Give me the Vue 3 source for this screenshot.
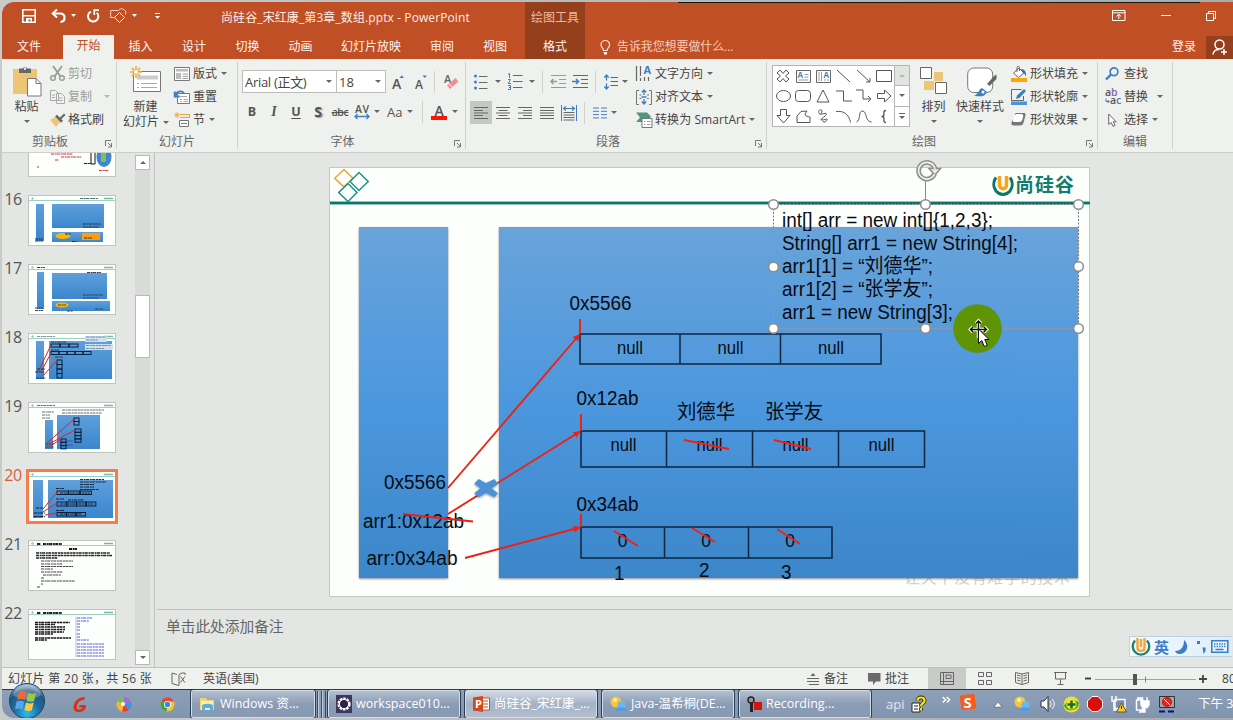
<script setup>
import { h } from 'vue'

const G = '#666'
const B = '#3f7fbf'
const lines = (x, w, ys, c = G) => ys.map((y, i) => `<path d="M${x} ${y}h${Array.isArray(w) ? w[i] : w}" stroke="${c}"/>`).join('')

// [width, height, markup]
const icons = {
  car: [6, 3, `<path d="M0 0h6L3 3z" fill="${G}"/>`],
  carw: [5, 3, '<path d="M0 0h5L2.5 3z" fill="#fff"/>'],
  sep: [1, 22, '<path d="M.5 0v22" stroke="#cfd1ce"/>'],
  save: [14, 14, '<path d="M.8.8h12.4v12.4H.8z" fill="none" stroke="#fff" stroke-width="1.6"/><path d="M1 6.8h12" stroke="#fff" stroke-width="1.5"/><path d="M4 9h6v4H8.500v-2.500H6.500V13H4z" fill="#fff"/>'],
  undo: [15, 14, '<path d="M2 4.500h7c6 0 6 8 .5 8.500" fill="none" stroke="#fff" stroke-width="2.100"/><path d="M6 .5L1.700 4.500 6 8.500" fill="none" stroke="#fff" stroke-width="2"/>'],
  redo: [14, 14, '<path d="M5 2.600A5.200 5.200 0 1 0 10.800 3.600" fill="none" stroke="#fff" stroke-width="2"/><path d="M8.300 6V1.200H13" fill="none" stroke="#fff" stroke-width="1.700"/>'],
  shapes: [17, 15, '<path d="M5 9.500H.7V2.500h8" fill="none" stroke="#f3cfc0"/><path d="M9.500 4.500l5 5-5 5-5-5z" fill="none" stroke="#fff"/><path d="M9 1.500c4-2 8 1 6.500 5" fill="none" stroke="#f3cfc0"/>'],
  custom: [5, 6, '<path d="M0 .5h5" stroke="#fff"/><path d="M0 3h5L2.500 5.700z" fill="#fff"/>'],
  ribopt: [14, 11, '<path d="M.5.5h12.500v10H.5zM.5 2.800h12.500M6.800 9V4.500M4.500 6.500l2.300-2.200 2.300 2.200" fill="none" stroke="#fff"/>'],
  min: [10, 2, '<path d="M0 .5h10" stroke="#fff"/>'],
  restore: [10, 10, '<path d="M.5 2.500h7v7h-7zM2.500 2.500V.5h7v7h-2" fill="none" stroke="#fff"/>'],
  bulb: [11, 15, '<path d="M3.500 10.500C3.500 8 1 7.500 1 4.800a4.300 4.300 0 0 1 8.600 0C9.600 7.500 7 8 7 10.500zM3.500 12.500H7.200" fill="none" stroke="#fbe3da" stroke-width="1.200"/><path d="M4 13h3v1.500H4z" fill="#fff"/>'],
  person: [17, 17, '<circle cx="7.500" cy="5.500" r="4.500" fill="none" stroke="#fff" stroke-width="1.500"/><path d="M1 15.500c.5-3.500 3-5 6-5M9 13h6M12 10v6" fill="none" stroke="#fff" stroke-width="1.500"/>'],
  paste: [29, 31, '<path d="M0 3h24v25H0z" fill="#edc576"/><path d="M6 7V2.500h3.500a3 3 0 0 1 5 0H18V7z" fill="#666"/><circle cx="12" cy="2.800" r="1.200" fill="#eee"/><path d="M14.500 12.500h8.500l5 5v12.500H14.500z" fill="#fff" stroke="#777"/><path d="M23 12.500v5h5" fill="none" stroke="#777"/>'],
  cut: [15, 15, '<path d="M3 0l7.500 10.500M12 0L4.500 10.500" stroke="#9b9d9b" stroke-width="1.900"/><circle cx="3" cy="12" r="2.300" fill="none" stroke="#9b9d9b" stroke-width="1.500"/><circle cx="12" cy="12" r="2.300" fill="none" stroke="#9b9d9b" stroke-width="1.500"/>'],
  copy: [15, 14, '<path d="M.5.5h5l3 3v7h-8zM6.500 3.500h5l3 3v7h-8z" fill="#f1f1f1" stroke="#a9aba9"/><path d="M2 5h3M2 7.500h3M8.500 8h4M8.500 10.500h4" stroke="#a9aba9"/>'],
  carg: [6, 3, '<path d="M0 0h6L3 3z" fill="#b5b7b5"/>'],
  brush: [16, 14, '<path d="M0 7l5-3 5 5-4 5z" fill="#edc576"/><path d="M5 3.500l2-1.800 6 6-2 2z" fill="#666"/><path d="M9.500 5L14 .5l1.500 1.500L11 6.500z" fill="#666"/>'],
  newslide: [32, 27, '<path d="M3.500 5.500h27v20h-27z" fill="#fff" stroke="#777"/><path d="M7 9.500h21v4H7z" fill="#ccc"/><path d="M7 17.500h2M11 17.500h16M7 21.500h2M11 21.500h16" stroke="#aaa"/><path d="M6 0v12M0 6h12M1.800 1.800l8.400 8.400M10.200 1.800l-8.400 8.400" stroke="#eab24f" stroke-width="1.700"/><circle cx="6" cy="6" r="2" fill="#fff"/>'],
  layout: [16, 14, '<path d="M.5.5h15v13H.5z" fill="#fff" stroke="#777"/><path d="M2 2h12v2.500H2zM2 6h5v6H2z" fill="#bbb"/><path d="M8.500 7h5.500M8.500 9.300h5.500M8.500 11.500h5.500" stroke="#999"/>'],
  reset: [16, 14, '<path d="M3.500 3.500h12v10h-12z" fill="#fff" stroke="#777"/><path d="M6 6.500h7M6 9.500h2M9.500 9.500H14M6 11.500h2M9.500 11.500H14" stroke="#aaa"/><path d="M1.500 6C2 1.500 7 0 10 3M.7 1.500v5h5" fill="none" stroke="#3f7fbf" stroke-width="1.900"/>'],
  section: [16, 15, '<path d="M6 2.500h9.500v3H6" fill="none" stroke="#e8a23a"/><path d="M5.500 8.500h9v6h-9zM7 11.500h6" fill="#fff" stroke="#777"/><path d="M3 0v6M0 3h6M1 1l4 4M5 1L1 5" stroke="#eab24f"/>'],
  launch: [7, 8, '<path d="M.5 6V.5H6M3 3l3.500 3.500M6.500 3v4H3" fill="none" stroke="#777"/>'],
  grow: [12, 14, '<text x="0" y="13.500" font-size="14" font-weight="600" fill="#555">A</text><path d="M7.500 3h4.500L9.800.3z" fill="#3f7fbf"/>'],
  shrink: [12, 14, '<text x="0" y="13.500" font-size="12" font-weight="600" fill="#555">A</text><path d="M7.500 .5h4.500L9.800 3z" fill="#3f7fbf"/>'],
  eraser: [15, 15, '<text x="0" y="9" font-size="11" font-weight="600" fill="#666">A</text><path d="M3 11.500L11.500 4l3 3.500L6 15z" fill="#ee8f97"/><path d="M5 9.800l3.500 3.500" stroke="#fff"/>'],
  spacing: [17, 16, '<text x="1" y="8.500" font-size="10.500" font-weight="600" fill="#555" textLength="14">AV</text><path d="M1 12.500h14M3.500 10L1 12.500l2.500 2.500M12.500 10l2.500 2.500-2.500 2.500" fill="none" stroke="#3f7fbf" stroke-width="1.300"/>'],
  color: [16, 16, '<text x="3.500" y="11.500" font-size="14" font-weight="600" fill="#555">A</text><path d="M0 12h16v4H0z" fill="#fd1205"/>'],
  bullets: [14, 16, '<circle cx="1.500" cy="2" r="1.500" fill="#3f7fbf"/><circle cx="1.500" cy="8" r="1.500" fill="#3f7fbf"/><circle cx="1.500" cy="14" r="1.500" fill="#3f7fbf"/>' + lines(5, 8.5, [2.5, 8.5, 14.5])],
  numbers: [15, 17, '<path d="M0 1.500L1.500.500V5M0 6.500h2.500L.3 10.500H3M0 12.500h2.500v4H0M1 14.500h1.500" fill="none" stroke="#3f7fbf"/>' + lines(5, 9.5, [2.5, 8.5, 14.5])],
  outdent: [17, 14, lines(9, 7, [4.5, 8.5], '#999') + lines(1, 15, [.5, 12.5], '#999') + '<path d="M1 6.500h6M3.500 4L1 6.500 3.500 9" fill="none" stroke="#999" stroke-width="1.500"/>'],
  indent: [17, 14, lines(9, 7, [4.5, 8.5]) + lines(1, 15, [.5, 12.5]) + '<path d="M0 6.500h6.500M4 4l2.500 2.500L4 9" fill="none" stroke="#3f7fbf" stroke-width="1.600"/>'],
  spaceln: [15, 16, lines(6.5, 7.5, [3.5, 7.5, 11.5]) + '<path d="M2.500 1v5.500M.3 3.500L2.500 1l2.200 2.500M2.500 9.500V15M.3 12.500L2.500 15l2.200-2.500" fill="none" stroke="#3f7fbf" stroke-width="1.300"/>'],
  left: [14, 12, '<path d="M0 .5h14M0 3.500h9M0 6h14M0 8.500h9M0 11.500h14" stroke="#666"/>'],
  center: [14, 12, '<path d="M0 .5h14M2.500 3.500h9M0 6h14M2.500 8.500h9M0 11.500h14" stroke="#666"/>'],
  right: [14, 12, '<path d="M0 .5h14M5 3.500h9M0 6h14M5 8.500h9M0 11.500h14" stroke="#666"/>'],
  justify: [14, 12, lines(0, 14, [.5, 3.5, 6, 8.5, 11.5])],
  dist: [17, 16, '<path d="M.5 0v16M15.500 0v16" stroke="#3f7fbf"/><path d="M2.500 3.500h11M5 1.500l-2.500 2L5 5.500M11 1.500l2.500 2-2.500 2" fill="none" stroke="#3f7fbf" stroke-width="1.200"/>' + lines(2.5, 11, [7.5, 10, 12.5, 15])],
  cols: [14, 12, lines(0, 6, [1, 4.3, 7.6, 10.9], B) + lines(8, 6, [1, 4.3, 7.6, 10.9], B)],
  tdir: [17, 17, '<path d="M.5 1v15M4.500 1v10M4.500 13v3M8.500 12v4M12.500 12v4" stroke="#666" stroke-width="1.200"/><text x="7.500" y="9" font-size="11" font-weight="700" fill="#3f7fbf">A</text>'],
  talign: [16, 16, '<path d="M3 1.500H.5v14H3M13 1.500h2.500v14H13M3.500 6h2M3.500 9.500h2M11 6h2M11 9.500h2" fill="none" stroke="#777"/><path d="M8 1v5M5.800 3.300L8 1l2.200 2.300M8 10v5M5.800 12.500L8 15l2.200-2.500M5.500 8h5" fill="none" stroke="#3f7fbf" stroke-width="1.300"/>'],
  smart: [17, 16, '<path d="M0 .5h11l4 4-2 2.500H6V10H0l4-4.500z" fill="#559484"/><path d="M6 6.500h10v9H6z" fill="#fff" stroke="#777"/><path d="M8 9.500h1.500M11 9.500h3.500M8 12.500h1.500M11 12.500h3.500" stroke="#999"/>'],
  g0: [14, 14, '<path d="M4 1L7 4.500 10 1l3 3-3.500 3L13 10l-3 3-3-3.500L4 13l-3-3 3.500-3L1 4z" fill="none" stroke="#555"/>'],
  g1: [15, 13, '<path d="M.5.5h14v12H.5z" fill="none" stroke="#666"/><text x="1.500" y="8" font-size="8" font-weight="700" fill="#3f7fbf">A</text><path d="M8.500 4.500h4M8.500 7h4M2.500 10h10" stroke="#999"/>'],
  g2: [15, 13, '<path d="M.5.5h14v12H.5z" fill="none" stroke="#666"/><text x="7.500" y="8" font-size="8" font-weight="700" fill="#3f7fbf">A</text><path d="M3 2v9M5.500 2v9M9 9v2M12 9v2" stroke="#999"/>'],
  g3: [15, 14, '<path d="M1 1l13 12" stroke="#555"/>'],
  g4: [15, 14, '<path d="M1 1l13 12M14 9v4h-4" fill="none" stroke="#555"/>'],
  g5: [16, 12, '<path d="M.5.5h15v11H.5z" fill="none" stroke="#555"/>'],
  g6: [15, 12, '<ellipse cx="7.500" cy="6" rx="7" ry="5.500" fill="none" stroke="#555"/>'],
  g7: [16, 12, '<rect x=".5" y=".5" width="15" height="11" rx="3" fill="none" stroke="#555"/>'],
  g8: [14, 14, '<path d="M7 1l6 12H1z" fill="none" stroke="#555"/>'],
  g9: [16, 12, '<path d="M0 1h7.500v10H16" fill="none" stroke="#555"/>'],
  g10: [16, 14, '<path d="M0 1h7v9h8M12 7l3 3-3 3" fill="none" stroke="#555"/>'],
  g11: [15, 14, '<path d="M.5 4.500h7V1l6.500 6-6.500 6V9.500h-7z" fill="none" stroke="#555"/>'],
  g12: [15, 15, '<path d="M4.500.5h6v6H14l-6.500 7.500L1 6.500h3.500z" fill="none" stroke="#555"/>'],
  g13: [15, 13, '<path d="M1 12.500V6l4-4.500 6-.5-2 3c0 2.500 3.500 2.500 5 3v5.500z" fill="none" stroke="#555"/>'],
  g14: [12, 15, '<path d="M3 5C-1 2 5-1 5 2S1 6 5 5s6-1 3 2-6 4-3 4 6-2 5 0-4 3-4 1" fill="none" stroke="#555"/>'],
  g15: [15, 13, '<path d="M0 1.500c8-1 13 3 14.500 11" fill="none" stroke="#555"/>'],
  g16: [16, 13, '<path d="M.5 12C5 10 2 1 6.500 1S9 12 15.500 12" fill="none" stroke="#555"/>'],
  g17: [6, 13, '<path d="M5 .5C2 .5 3 3 3 4.500S2 6.500.5 6.500C2 6.500 3 7 3 8.500s-1 4 2 4" fill="none" stroke="#555" stroke-width="1.300"/>'],
  arrange: [28, 28, '<path d="M14 5h9v9h-9zM4 14h10v9H4z" fill="#edc576"/><path d="M.5.5h11v11H.5zM15.500 15.500h11v11h-11z" fill="#fff" stroke="#666"/>'],
  qstyle: [30, 30, '<rect x=".7" y="1" width="25" height="24.500" rx="6" fill="#fff" stroke="#777"/><path d="M20 17l7-8 2.500-1.500V12l-7 7z" fill="#666"/><path d="M7 28.500c5-1 4-6 8-7.500l5 4c-2 5-8 5-13 3.500z" fill="#3f7fbf"/><circle cx="16" cy="25" r="1.500" fill="#fff"/>'],
  fill: [16, 16, '<path d="M2.500 7L8 2l5 5-5.500 4.500z" fill="#fff" stroke="#666"/><path d="M6 6V1.500C6 0 8.500 0 8.500 1.500V5" fill="none" stroke="#666"/><path d="M10 3c4 0 5.500 3 5 8-1-3-2-4-3-4z" fill="#3c6ea4"/><path d="M0 12h16v4H0z" fill="#ffa40d"/>'],
  outline: [16, 16, '<path d="M12.500 7v4.500H.5V.5h10" fill="none" stroke="#666"/><path d="M5 10l1-3.500L13 0l2 2-6.500 7z" fill="#3f7fbf"/><path d="M0 12.500h16V16H0z" fill="#4c94d8"/>'],
  effect: [15, 13, '<path d="M4.500 0H13c1 0 2 1 1.500 2L13 8c-.5 3-2 4.500-4 4.500H3C0 12.500 0 11 .8 9z" fill="#777"/><rect x="2" y="1" width="9.500" height="8" rx="2.500" transform="skewX(-14) translate(1.500)" fill="#fff"/>'],
  find: [14, 13, '<circle cx="9" cy="4.800" r="3.900" fill="none" stroke="#3f7fbf" stroke-width="1.700"/><path d="M6 7.500L1 12.500" stroke="#3f7fbf" stroke-width="2.400"/>'],
  replace: [17, 17, '<g font-size="10.500" font-weight="600"><text x="0" y="8" fill="#555">a</text><text x="6" y="8" fill="#8d5fa8">b</text><text x="5" y="16" fill="#555">a</text><text x="11" y="16" fill="#3f7fbf">c</text></g><path d="M1 10.500v3h3M2.700 12l1.500 1.500L2.700 15" fill="none" stroke="#3f7fbf"/>'],
  select: [9, 14, '<path d="M.7 1v10.500l2.500-2L5 13.300l2-1-1.800-3.500h3z" fill="#fff" stroke="#666"/>'],
  proof: [15, 14, '<path d="M6 2.500L1 1v10.500l5 1.500M8 2.500L11 1M8 2.500v11M6 13l2 .5" fill="none" stroke="#666"/><path d="M9.500 4.500l4.500 6M14 4.500l-4.500 6M11 1h3v2" fill="none" stroke="#666"/>'],
  note: [12, 12, '<path d="M6 0l2.500 3h-5z" fill="#666"/><path d="M0 5.500h12M0 8.500h12M2 11.500h10" stroke="#666"/>'],
  comment: [13, 12, '<path d="M0 0h12.500v8.500H8L5 12V8.500H0z" fill="#6a6a6a"/>'],
  normal: [14, 13, '<path d="M.5.5h13v12H.5zM3.500.5v12M.5 9.500h3M6 3h5v3.500H6zM3.500 9.500h10" fill="none" stroke="#666"/>'],
  sorter: [14, 13, '<path d="M.5.5h5v4h-5zM8.500.5h5v4h-5zM.5 8.500h5v4h-5zM8.500 8.500h5v4h-5z" fill="none" stroke="#666"/>'],
  reading: [14, 13, '<path d="M7 2L.5.5v10L7 12.500l6.500-2V.5zV12.500M2 3l3.500 1M2 5.500l3.500 1M2 8l3.500 1M12 3L8.500 4M12 5.500l-3.500 1M12 8l-3.500 1" fill="none" stroke="#666"/>'],
  show: [13, 13, '<path d="M0 .5h13M1.500.5v6.500h10V.5M6.500 7v5M3.500 12.500h6" fill="none" stroke="#666"/>'],
  zminus: [6, 3, '<path d="M0 1.500h6" stroke="#444" stroke-width="2"/>'],
  zplus: [8, 8, '<path d="M0 4h8M4 0v8" stroke="#444" stroke-width="1.800"/>'],
  slider: [101, 12, '<path d="M0 6.500h101" stroke="#a0a2a0"/><path d="M50.500 3.500v6" stroke="#888"/><path d="M38 1h4v11h-4z" fill="#555"/>'],
  gred: [16, 17, '<path d="M13 1C7 1 2 5 1.500 10.500 1 15 4 16.500 8 16c4-.5 6.500-3 6-7H7.500l-.5 2.500h3.500c-.5 1.500-2 2-3.500 2-2 0-2.500-1.500-2-4C5.500 6 9 4 12 4z" fill="#d93314"/>'],
  pinwheel: [16, 17, '<circle cx="8" cy="8.500" r="7.500" fill="#f5b52c"/><path d="M8 8.500L1 5a7.500 7.500 0 0 1 7-4z" fill="#6cc24a"/><path d="M8 8.500V1a7.500 7.500 0 0 1 7 4.500z" fill="#a06bd6"/><path d="M8 8.500l7-3a7.500 7.500 0 0 1-2 8.500z" fill="#3f8fe0"/><path d="M8 8.500l5 5.500a7.500 7.500 0 0 1-7 1.500z" fill="#e8412f"/><circle cx="7" cy="8" r="2" fill="#fff"/>'],
  chrome: [15, 15, '<circle cx="7.500" cy="7.500" r="7" fill="#f6c928"/><path d="M7.500 7.500L1.400 4A7 7 0 0 1 14 4.500H7.500z" fill="#df4a36"/><path d="M7.500 7.500L1.400 4A7 7 0 0 0 6.500 14.500z" fill="#3fa24e"/><circle cx="7.500" cy="7.500" r="3.500" fill="#fff"/><circle cx="7.500" cy="7.500" r="2.700" fill="#4285d6"/>'],
  explorer: [17, 15, '<path d="M1 1h6l1 2h7v10H1z" fill="#f3d36b"/><path d="M2 4h12v9H2z" fill="#fbeeb0"/><path d="M3 14V9c0-3 11-3 11 0v5h-3v-3H6v3z" fill="#5aaee0"/>'],
  eclipse: [16, 18, '<path d="M0 0h16v18H0z" fill="#3f3562"/><circle cx="8" cy="9" r="5.500" fill="#2b2444" stroke="#fff" stroke-width="2.200" stroke-dasharray="2.500 1"/><circle cx="8" cy="9" r="4.600" fill="none" stroke="#fff"/>'],
  ppt: [17, 16, '<path d="M8 2h8.500v12H8z" fill="#fff" stroke="#d3481f"/><path d="M10 5h5M10 8h5M10 11h5" stroke="#d3481f"/><path d="M0 1.500L10 0v16L0 14.500z" fill="#d3481f"/><text x="2" y="12" font-size="11" font-weight="700" fill="#fff">P</text>'],
  chat: [17, 16, '<circle cx="6" cy="6" r="5.500" fill="#f8c637"/><circle cx="11.500" cy="9" r="4" fill="#6db7ee"/><path d="M6 15c0-5 10-5 10 0z" fill="#4aa0e6"/><circle cx="5" cy="4" r="2" fill="#fdeaa5"/>'],
  rec: [15, 17, '<path d="M7 6h8v8H7z" fill="#d8120c"/><circle cx="4" cy="4" r="3" fill="#999" stroke="#222" stroke-width="1.400"/><path d="M3 7h3v9H3z" fill="#222"/>'],
  help: [15, 17, '<path d="M1 7h8v9H1z" fill="#fff" stroke="#222"/><path d="M3 10h4M3 13h4" stroke="#222"/><path d="M6.500 4.500c0-4 7-4 7 0 0 3-3.500 2.500-3.500 5.500M10 12v2.500" fill="none" stroke="#222" stroke-width="3.800"/><path d="M6.500 4.500c0-4 7-4 7 0 0 3-3.500 2.500-3.500 5.500M10 12v2.500" fill="none" stroke="#ffe600" stroke-width="2.200"/>'],
  chev: [9, 8, '<path d="M.7 1l3 2.700-3 2.700M4.700 1l3 2.700-3 2.700" fill="none" stroke="#fff" stroke-width="1.400"/>'],
  sogou: [16, 16, '<rect x=".5" y=".5" width="15" height="15" rx="2.500" fill="#fa5a1a" transform="rotate(-8 8 8)"/><text x="3.500" y="13.500" font-size="15" font-weight="700" fill="#fff">S</text>'],
  up: [8, 5, '<path d="M0 5h8L4 0z" fill="#fff" stroke="#445" stroke-width=".5"/>'],
  speaker: [15, 16, '<path d="M1 5h3l4-4.500v15L4 11H1z" fill="#fff" stroke="#333"/><path d="M10 5c1.500 2 1.500 4 0 6M12 3c3 3 3 7 0 10" fill="none" stroke="#fff"/>'],
  guard: [17, 17, '<circle cx="8.500" cy="8.500" r="8" fill="#f6dd24"/><path d="M1 10C3 4 13 2 16 7a8 8 0 0 1-15 3z" fill="#39a635"/><circle cx="8.500" cy="8.500" r="5" fill="#f6e83a"/><path d="M8.500 4.500v8M4.500 8.500h8" stroke="#176c20" stroke-width="2.500"/>'],
  redoct: [16, 16, '<path d="M5 .5h6L15.500 5v6L11 15.500H5L.5 11V5z" fill="#d80f0b" stroke="#fff"/>'],
  net: [16, 17, '<path d="M4 3.500h10v9H4z" fill="#7c8fa6" stroke="#fff" stroke-width="1.400"/><path d="M1 0v5h4V0M3 5v9h3" fill="none" stroke="#fff" stroke-width="1.500"/><path d="M10.500 7l5 9h-10z" fill="#ffce1e" stroke="#553"/><path d="M10.500 10v3" stroke="#222"/>'],
  plug: [15, 17, '<path d="M1.500 4h6v10h-6zM3 2h3v2H3z" fill="none" stroke="#fff" stroke-width="1.500"/><path d="M6 5h8v4l-2 2.500H8L6 9zM7.500 1v4M12 1v4M10 11v5H4" fill="#fff" stroke="#fff" stroke-width="1.400"/>'],
  blocked: [16, 17, '<path d="M.5.5h15v11H.5z" fill="#9aa" stroke="#333"/><circle cx="8" cy="6" r="4.300" fill="#c33" stroke="#e01010" stroke-width="1.500"/><path d="M5 3l6 6" stroke="#fff"/><path d="M0 15.500h6M9 15.500h6" stroke="#10107a" stroke-width="2"/>'],
}
const Ic = (p) => {
  const [w, ht, m] = icons[p.n]
  return h('svg', { width: w, height: ht, viewBox: `0 0 ${w} ${ht}`, innerHTML: m })
}
Ic.props = ['n']

const tabsA = [['插入', 53], ['设计', 54], ['切换', 53], ['动画', 53], ['幻灯片放映', 88], ['审阅', 54], ['视图', 52]]
const px = (w) => ({ width: w + 'px' })

// toolbar cells: icon name, cell width
const fontRow = [['spacing', 20], ['car', 12]]
const paraTop = [['bullets', 21], ['car', 13], ['numbers', 21], ['car', 13], ['sep', 8], ['outdent', 22], ['indent', 23], ['sep', 9], ['spaceln', 18], ['car', 6]]
const paraBot = [['center', 22], ['right', 22], ['justify', 21], ['dist', 23], ['sep', 9], ['cols', 18], ['car', 6]]

const ink = (c, list, w = 1) => list.map(([x, y, l]) => `<path d="M${x} ${y}h${l}" stroke="${c}" stroke-width="${w}" stroke-dasharray="3 .7 2 .4"/>`).join('')
const blue = (x, y, w, hh) => `<rect x="${x}" y="${y}" width="${w}" height="${hh}" fill="url(#thumbBlue)"/>`
const head = '<path d="M0 4.500h86" stroke="#9fd0c6"/><path d="M2 2.500l1.500-1.500L5 2.500 3.500 4z" fill="#8fcabb"/><path d="M75 2.500h9" stroke="#79b9a0" stroke-width="1.500"/>'
const redln = (d) => `<path d="${d}" fill="none" stroke="#e2231a"/>`
const cells = (x, y, w, hh, n) => Array.from({ length: n }, (_, i) => `<rect x="${x + i * w}" y="${y}" width="${w}" height="${hh}" fill="none" stroke="#0b1f3a"/>`).join('')
const vcells = (x, y, w, hh, n) => Array.from({ length: n }, (_, i) => `<rect x="${x}" y="${y + i * hh}" width="${w}" height="${hh}" fill="none" stroke="#0b1f3a"/>`).join('')
const thumbs = [
  { n: '', m: ink('#c33', [[22, 27, 22], [32, 30, 20], [26, 33, 4], [8, 40, 2]]) + '<ellipse cx="75" cy="30" rx="7.500" ry="10" fill="#3f86d0"/><path d="M72 24h5v11h-5z" fill="#7fc05a"/><path d="M62 25v12h4V25" fill="none" stroke="#111"/>' + ink('#111', [[55, 36.5, 7]]) + ink('#e33', [[70, 43.5, 10]]) },
  { n: 16, m: head + blue(7, 8, 8, 37) + blue(23, 8, 52, 24) + blue(23, 36, 51, 10) + '<ellipse cx="34" cy="40" rx="7.500" ry="3" fill="#f8b40c"/><path d="M53 37h18v7H53z" fill="#ff9d0b"/>' + ink('#567', [[51, 2.500, 18]]) + ink('#234', [[54, 28, 18], [54, 31, 16], [6, 43, 8], [6, 45, 8], [55, 42, 8], [36, 38, 6], [43, 45.500, 5]]) },
  { n: 17, m: head + blue(8, 7, 7, 37) + blue(23, 8, 55, 26) + blue(23, 36, 58, 10) + '<ellipse cx="33" cy="40" rx="6.500" ry="2.600" fill="#f8b40c"/>' + ink('#345', [[8, 2.5, 8], [58, 7.5, 14], [54, 30, 20], [54, 33, 16], [6, 43, 8], [6, 45.5, 8], [29, 40, 8], [66, 44, 8], [38, 46, 6]]) },
  { n: 18, m: head + blue(7, 7, 8, 38) + blue(20, 7, 63, 38) + '<path d="M56 2h22v6H56zM56 10h28v6H56z" fill="#cfe0f2"/>' + cells(22, 10, 9, 3, 3) + cells(22, 17.5, 8, 3, 5) + vcells(28, 26, 5, 4.500, 4) + redln('M9 38L22 11M12 38L22 19M14 42L28 26') + ink('#567', [[8, 2.5, 18], [57, 3, 20], [57, 6, 12], [57, 11.500, 25], [57, 14.500, 18]], .7) + ink('#123', [[22, 8, 16], [22, 16, 8], [26, 23, 8], [8, 35, 8], [6, 38, 10], [7, 44, 10]], .8) },
  { n: 19, m: head + blue(16, 17, 8, 29) + blue(28, 12, 43, 34) + vcells(45, 15, 5, 3.500, 2) + vcells(46, 26, 6, 3.300, 4) + vcells(32, 36, 5, 3.300, 3) + redln('M17 41L45 16M18 42L46 27M20 44L32 36') + ink('#445', [[8, 2.500, 18], [33, 7, 42], [33, 10, 40], [13, 9, 12], [13, 12, 8], [13, 15, 8], [16, 41, 9], [16, 44, 9], [38, 38, 6], [38, 42, 6]], .8) },
  { n: 20, sel: true, m: head + blue(4, 8, 10, 38) + blue(19, 8, 65, 38) + cells(28, 19, 11.500, 3.500, 3) + cells(28, 30, 9.700, 4, 4) + cells(28, 40.500, 9.500, 3.500, 3) + redln('M14 37L28 20M14 40L28 31M16 43L28 41') + ink('#0b1a30', [[51, 7.500, 24], [51, 10, 26], [51, 12.500, 14], [51, 15, 14], [51, 17.500, 19], [27, 16.500, 8], [27, 27, 8], [39, 28, 16], [27, 38.500, 8], [7, 36, 7], [5, 41, 11], [5, 44.500, 11], [31, 21, 30], [31, 32, 34], [31, 42, 22]], .9) },
  { n: 21, m: head + ink('#222', [[8, 3, 4], [14, 3, 19]], 2) + ink('#111', [[40, 8, 8]], 2) + ink('#222', [[7, 12, 74], [7, 14.500, 76], [7, 17, 22]], 1.300) + ink('#444', [[12, 20, 32], [12, 23, 22], [12, 25.500, 32], [12, 28, 12], [12, 31, 22], [14, 34, 18], [12, 37, 3], [12, 40, 34], [12, 43, 2], [8, 46, 3]]) },
  { n: 22, m: head + ink('#222', [[8, 3, 4], [14, 3, 19]], 2) + ink('#111', [[6, 12.500, 35], [6, 14.500, 20], [6, 17, 30], [6, 19.500, 30], [6, 22, 29], [6, 24, 18], [6, 28, 36], [6, 30, 12]], 1.300) + ink('#5a5ad8', [[48, 8, 15], [48, 11, 12], [48, 14, 3], [48, 17, 3], [48, 20, 3], [48, 24, 3], [48, 27, 3], [48, 30, 12], [48, 34, 27], [48, 37, 27], [48, 40, 27], [48, 43, 27], [48, 46, 27]]) + '<path d="M47 7v40" stroke="#bbc"/>' },
]

const handles = [[773.5, 204.5], [925.5, 204.5], [1078.5, 204.5], [773.5, 267], [1078.5, 266.5], [773.5, 328.5], [925.5, 328.5], [1078.5, 328.5]]
const code = [['int[] arr = new int[]{1,2,3};', 227, 211], ['String[] arr1 = new String[4];', 250, 236], ['arr1[1] = “刘德华”;', 273, 151], ['arr1[2] = “张学友”;', 296, 151], ['arr1 = new String[3];', 319, 171]]
const labels = [['0x5566', 569.5, 310, 62], ['0x12ab', 576.5, 405, 62], ['0x34ab', 576.5, 511, 62], ['0x5566', 384, 489, 62], ['arr1:0x12ab', 363, 528, 101], ['arr:0x34ab', 366.5, 565, 91], ['刘德华', 677, 419, 58], ['张学友', 765, 419, 58], ['1', 614, 580, 10.5], ['2', 699, 577, 10.5], ['3', 781, 579, 10.5]]
const nulls = [[617, 354], [717.5, 354], [818, 354], [610.5, 451], [696.5, 451], [782.5, 451], [868.5, 451]]
const tray = [['chev', 18], ['sogou', 34], ['up', 20], ['chat', 26], ['speaker', 23], ['guard', 24], ['redoct', 24], ['net', 24], ['plug', 24], ['blocked', 39]]
</script>

<template>
  <div class="desk">
    <div class="win">
      <header class="title">
        <Ic n="save" class="m20" /><Ic n="undo" class="m15" /><Ic n="carw" class="m5" /><Ic n="redo" class="m10" />
        <Ic n="shapes" class="m10" /><Ic n="carw" class="m5" /><Ic n="custom" class="m17" />
        <span class="name">尚硅谷_宋红康_第3章_数组.pptx - PowerPoint</span>
        <span class="ctx">绘图工具</span>
        <div class="wbtns"><Ic n="ribopt" /><Ic n="min" /><Ic n="restore" /></div>
      </header>
      <nav class="tabs">
        <span class="file">文件</span><span class="active">开始</span>
        <span v-for="t in tabsA" :key="t[0]" :style="px(t[1])">{{ t[0] }}</span>
        <span class="fmt">格式</span>
        <Ic n="bulb" class="m15" /><span class="tell">告诉我您想要做什么...</span>
        <span class="login">登录</span>
        <span class="share"><Ic n="person" /></span>
      </nav>

      <section class="ribbon">
        <div class="grp g-clip">
          <div class="gbody">
            <div class="big"><Ic n="paste" class="bi" /><span>粘贴</span><Ic n="car" /></div>
            <div class="col c1">
              <div class="row dim"><i><Ic n="cut" /></i>剪切</div>
              <div class="row dim"><i><Ic n="copy" /></i>复制<Ic n="carg" class="m12" /></div>
              <div class="row"><i><Ic n="brush" /></i>格式刷</div>
            </div>
          </div>
          <div class="glabel"><b>剪贴板</b><Ic n="launch" /></div>
        </div>

        <div class="grp g-slide">
          <div class="gbody">
            <div class="big"><Ic n="newslide" class="bi" /><span>新建</span><span class="two">幻灯片<Ic n="car" /></span></div>
            <div class="col c2">
              <div class="row"><i><Ic n="layout" /></i>版式<Ic n="car" class="m4" /></div>
              <div class="row"><i><Ic n="reset" /></i>重置</div>
              <div class="row"><i><Ic n="section" /></i>节<Ic n="car" class="m4" /></div>
            </div>
          </div>
          <div class="glabel"><b>幻灯片</b></div>
        </div>

        <div class="grp g-font">
          <div class="gbody rows">
            <div class="tr">
              <div class="combo fam"><span>Arial (正文)</span><Ic n="car" /></div>
              <div class="combo size"><span>18</span><Ic n="car" /></div>
              <Ic n="grow" class="m6" /><Ic n="shrink" class="m11" /><Ic n="sep" class="m7" /><Ic n="eraser" class="m9" />
            </div>
            <div class="tr t2">
              <span class="f bold">B</span><span class="f ital">I</span><span class="f und">U</span><span class="f shad">S</span><span class="f abc">abc</span>
              <div v-for="(c, i) in fontRow" :key="i" :style="px(c[1])"><Ic :n="c[0]" /></div>
              <span class="aa">Aa</span><Ic n="car" class="m4" /><Ic n="sep" class="m9" /><Ic n="color" class="m8" /><Ic n="car" class="m5" />
            </div>
          </div>
          <div class="glabel"><b>字体</b><Ic n="launch" /></div>
        </div>

        <div class="grp g-para">
          <div class="gbody">
            <div class="rows pr">
              <div class="tr pt"><div v-for="(c, i) in paraTop" :key="i" :style="px(c[1])"><Ic :n="c[0]" /></div></div>
              <div class="tr pb"><div class="on"><Ic n="left" /></div><div v-for="(c, i) in paraBot" :key="i" :style="px(c[1])"><Ic :n="c[0]" /></div></div>
            </div>
            <div class="col">
              <div class="row"><i><Ic n="tdir" /></i>文字方向<Ic n="car" class="m4" /></div>
              <div class="row"><i><Ic n="talign" /></i>对齐文本<Ic n="car" class="m4" /></div>
              <div class="row smart"><i><Ic n="smart" /></i>转换为 SmartArt<Ic n="car" class="m4" /></div>
            </div>
          </div>
          <div class="glabel"><b>段落</b><Ic n="launch" /></div>
        </div>

        <div class="grp g-draw">
          <div class="gbody">
            <div class="gallery">
              <div class="shapes"><div v-for="k in 18" :key="k"><Ic :n="'g' + (k - 1)" /></div></div>
              <div class="gs"><div class="off"><Ic n="carg" class="flip" /></div><div><Ic n="car" /></div><div class="more"><Ic n="car" /></div></div>
            </div>
            <div class="big arr"><Ic n="arrange" class="bi" /><span>排列</span><Ic n="car" /></div>
            <div class="big qs"><Ic n="qstyle" class="bi" /><span>快速样式</span><Ic n="car" /></div>
            <div class="col">
              <div class="row"><i><Ic n="fill" /></i>形状填充<Ic n="car" class="m4" /></div>
              <div class="row"><i><Ic n="outline" /></i>形状轮廓<Ic n="car" class="m4" /></div>
              <div class="row"><i><Ic n="effect" /></i>形状效果<Ic n="car" class="m4" /></div>
            </div>
          </div>
          <div class="glabel"><b>绘图</b><Ic n="launch" /></div>
        </div>

        <div class="grp g-edit">
          <div class="gbody">
            <div class="col">
              <div class="row"><i><Ic n="find" /></i>查找</div>
              <div class="row"><i><Ic n="replace" /></i>替换<Ic n="car" class="m9" /></div>
              <div class="row"><i class="sel"><Ic n="select" /></i>选择<Ic n="car" class="m4" /></div>
            </div>
          </div>
          <div class="glabel"><b>编辑</b></div>
        </div>
      </section>

      <main class="work">
        <svg class="defs" width="0" height="0"><defs><linearGradient id="thumbBlue" x1="0" y1="0" x2="0" y2="1"><stop offset="0" stop-color="#5f9fdb" /><stop offset="1" stop-color="#3b86cd" /></linearGradient></defs></svg>
        <aside class="list">
          <div v-for="t in thumbs" :key="t.n" class="item" :class="{ sel: t.sel }">
            <span>{{ t.n }}</span>
            <svg class="th" width="86" height="49" viewBox="0 0 86 49" v-html="t.m"></svg>
          </div>
        </aside>
        <div class="scroll"><div class="sb"><Ic n="car" class="flip" /></div><div class="knob"></div><div class="sb"><Ic n="car" /></div></div>
        <div class="editor">
          <svg class="canvas" width="1076" height="456" viewBox="157 153 1076 456">
            <defs>
              <linearGradient id="panel" x1="0" y1="0" x2="0" y2="1"><stop offset="0" stop-color="#69a3da" /><stop offset=".5" stop-color="#4c97de" /><stop offset="1" stop-color="#3c86ca" /></linearGradient>
              <filter id="sh" x="-10%" y="-10%" width="120%" height="120%"><feDropShadow dx="0" dy="1" stdDeviation="1.3" flood-color="#000" flood-opacity=".45" /></filter>
              <marker id="ah" viewBox="0 0 6 6" refX="5.5" refY="3" markerWidth="7" markerHeight="7" markerUnits="userSpaceOnUse" orient="auto"><path d="M0 0l6 3-6 3z" fill="#f02010" /></marker>
            </defs>
            <rect x="329.5" y="167.5" width="760" height="429" fill="#fdfffd" stroke="#c6c8c5" />
            <rect x="330" y="201.3" width="760" height="3.4" fill="#62b0a2" /><rect x="330" y="202" width="760" height="2" fill="#0a766a" />
            <g fill="none" stroke-width="1.5">
              <path d="M344 169.500l9 8.700-9 8.700-9.300-8.700z" stroke="#f0a232" />
              <path d="M359 172.500l9.200 9-9.200 9-9-9z" stroke="#189488" /><path d="M348 183.500l9 9-9 9-9.300-9z" stroke="#189488" />
            </g>
            <text x="904" y="583" class="wm" textLength="166">让天下没有难学的技术</text>
            <rect x="359" y="227" width="89" height="351" fill="url(#panel)" filter="url(#sh)" />
            <rect x="499" y="227" width="579" height="351" fill="url(#panel)" filter="url(#sh)" />
            <g fill="none">
              <path d="M996 177.500c-3 4-3 9.500 0 13.500 4 4.500 10 4.500 14 0 3-4 3-9.500 0-13.500" stroke="#0c776b" stroke-width="3" />
              <path d="M999.500 176v9c0 5 7 5 7 0v-9" stroke="#fba21c" stroke-width="3.600" />
            </g>
            <text x="1015" y="191.500" class="brand" textLength="59">尚硅谷</text>
            <g fill="none" stroke="#10253f" stroke-width="1.5">
              <path d="M580 334h301v30H580zM680 334v30M780.500 334v30" />
              <path d="M581 431h343.500v36H581zM666.500 431v36M752.500 431v36M838.500 431v36" />
              <path d="M581 527h251v31H581zM664.500 527v31M748.500 527v31" />
            </g>
            <text v-for="(l, i) in labels" :key="'l' + i" class="lab" :x="l[1]" :y="l[2]" :textLength="l[3]" lengthAdjust="spacingAndGlyphs">{{ l[0] }}</text>
            <text v-for="(l, i) in nulls" :key="'n' + i" class="nul" :x="l[0]" :y="l[1]" textLength="26" lengthAdjust="spacingAndGlyphs">null</text>
            <text v-for="x in [622.5, 706, 790]" :key="x" class="nul" :x="x" y="547" text-anchor="middle">0</text>
            <g fill="none" stroke="#f02010" stroke-width="1.9">
              <path d="M580 319v14.500M581 414v17M581 514v13" />
              <path d="M448 488L579.500 334.500" marker-end="url(#ah)" /><path d="M448 514L580 431.500" marker-end="url(#ah)" /><path d="M465 558L580 527.500" marker-end="url(#ah)" />
              <path d="M403 514l70 7.500M684 440l45 9M774 440l37 9M614 531l24 15M692 528l23 14M777 529l23 15" />
            </g>
            <path d="M478.700 479L486 483l8.300-4 3.700 4.700-6.300 4.600 6.300 5-3.700 4-8.300-4.300-7.300 4.300-4.400-4 6-5-6-4.600z" fill="#4d91d6" filter="url(#sh)" />
            <path d="M773.500 204.500H1078M773.500 205v22M1078.500 205v124" fill="none" stroke="#777" stroke-dasharray="2 1.500" />
            <path d="M773.500 227v101.500H1078" fill="none" stroke="#8298b3" />
            <path d="M925.500 180v24" stroke="#888" />
            <path d="M934.500 174a8.300 8.300 0 1 1 .5-5" fill="none" stroke="#8d8f8d" stroke-width="4.800" /><path d="M929 168.500h11.500l-5.500 6.500z" fill="#eee" stroke="#8d8f8d" stroke-width="1.500" />
            <path d="M934.500 174a8.300 8.300 0 1 1 .5-5" fill="none" stroke="#eee" stroke-width="1.700" />
            <text v-for="c in code" :key="c[0]" class="lab" x="782" :y="c[1]" :textLength="c[2]" lengthAdjust="spacingAndGlyphs">{{ c[0] }}</text>
            <circle v-for="(c, i) in handles" :key="'h' + i" :cx="c[0]" :cy="c[1]" r="4.800" fill="#fff" stroke="#8b8d8e" stroke-width="1.500" />
            <path d="M953.500 303v21" stroke="#b08868" />
            <circle cx="977.5" cy="328.5" r="24.300" fill="#5f9407" />
            <path d="M978.500 321v17M970.500 329.500h16M976 323.500l2.500-2.500 2.500 2.500M973 327l-2.500 2.500 2.500 2.500M984 327l2.500 2.500-2.500 2.500" fill="none" stroke="#fff" stroke-width="3.400" />
            <path d="M978.500 321v17M970.500 329.500h16M976 323.500l2.500-2.500 2.500 2.500M973 327l-2.500 2.500 2.500 2.500M984 327l2.500 2.500-2.500 2.500" fill="none" stroke="#111" stroke-width="1.400" />
            <path d="M978.500 329v14.500l3.300-3 2.500 6 3-1.200-2.600-5.800h4.300z" fill="#fff" stroke="#111" />
          </svg>
          <div class="notes">单击此处添加备注</div>
          <div class="ime">
            <svg width="18" height="19" viewBox="0 0 18 19"><path d="M3 3.500C0 7 0 12 3 15c3.500 3.500 8.500 3.500 12 0 3-3 3-8 0-11.500" fill="none" stroke="#25806f" stroke-width="2.400" /><path d="M5.500 1v9.500c0 4.500 7 4.500 7 0V1M9 2v8" fill="none" stroke="#f2a33a" stroke-width="2.400" /></svg>
            <span>英</span>
            <svg width="13" height="14" viewBox="0 0 13 14"><path d="M9 0c6 5 3 14-4.500 14C2 14 .5 12.500 0 11 7 11 9 6 9 0z" fill="#3a7dc8" /></svg>
            <svg class="pu" width="9" height="14" viewBox="0 0 9 14"><path d="M0 1h3v3H0zM5.500 7.500h3V11l-2 3" fill="#3a7dc8" /></svg>
            <svg width="17" height="13" viewBox="0 0 17 13"><path d="M.8.8h16v11.400H.8z" fill="#e9f3fc" stroke="#3a7dc8" stroke-width="1.600" /><path d="M3 4h12M3 6.500h12" stroke="#3a7dc8" stroke-width="1.500" stroke-dasharray="1.500 1" /><path d="M4.500 9.500h8" stroke="#3a7dc8" stroke-width="1.500" /></svg>
          </div>
        </div>
      </main>

      <footer class="status">
        <span class="pages">幻灯片 第 20 张，共 56 张</span><Ic n="proof" /><span class="lang">英语(美国)</span>
        <div class="sr">
          <Ic n="note" /><span class="s1">备注</span><Ic n="comment" /><span class="s2">批注</span>
          <div class="son"><Ic n="normal" /></div><Ic n="sorter" class="m12" /><Ic n="reading" class="m23" /><Ic n="show" class="m25" />
          <Ic n="zminus" class="m18" /><Ic n="slider" class="m4" /><Ic n="zplus" class="m3" /><span class="pct">80%</span>
        </div>
      </footer>

      <div class="task">
        <svg class="orb" width="38" height="36" viewBox="0 0 38 36">
          <defs><radialGradient id="orbg" cx=".5" cy=".85" r=".8"><stop offset="0" stop-color="#27c0f4" /><stop offset=".45" stop-color="#1f6c9f" /><stop offset=".8" stop-color="#24577f" /><stop offset="1" stop-color="#9bb5c9" /></radialGradient></defs>
          <circle cx="19" cy="18" r="17.500" fill="url(#orbg)" stroke="#1e4565" />
          <path d="M5 12C9-1 29-1 33 12 27 17 11 17 5 12z" fill="#fff" opacity=".25" />
          <path d="M11 9c3-1.500 5-1 7.500.3L17 17c-3-1.200-5-1.300-8 0z" fill="#ee6a35" /><path d="M20 10c3 1.200 5 1.300 8 0l-2 8c-3 1.300-5 1-7.500-.3z" fill="#9bc944" />
          <path d="M8.500 18.500c3-1.300 5-1 7.700.2l-1.700 7.500c-3-1-5-1-7.500.3z" fill="#52a8e8" /><path d="M18 19.500c3 1.200 5 1.300 7.800 0l-2 7.800c-3 1.300-5 1-7.500-.3z" fill="#fcc93c" />
        </svg>
        <Ic n="gred" class="m26" /><Ic n="pinwheel" class="m28" /><Ic n="chrome" class="m28" />
        <div class="tb b1"><Ic n="explorer" /><span>Windows 资...</span></div>
        <div class="stack"></div>
        <div class="tb b2"><Ic n="eclipse" /><span>workspace010...</span></div>
        <div class="tb b3"><Ic n="ppt" /><span>尚硅谷_宋红康_...</span></div>
        <div class="tb b4"><Ic n="chat" /><span>Java-温希桐(DE...</span></div>
        <div class="tb b5"><Ic n="rec" /><span>Recording...</span></div>
        <span class="api">api</span><div class="hp"><Ic n="help" /></div>
        <div v-for="t in tray" :key="t[0]" class="tc" :class="t[0]" :style="px(t[1])"><Ic :n="t[0]" /></div>
        <span class="clock">下午 3:06</span>
      </div>
    </div>
  </div>
</template>

<style>
html, body { margin: 0; overflow: hidden; }
svg { display: block; flex: none; overflow: visible; }
</style>
<style scoped>
.desk { width: 1233px; height: 720px; box-sizing: border-box; padding: 2px 0 2px 2px; background: linear-gradient(90deg, #c9cbca, #a9abaa); overflow: hidden; font: 12px/18px "Open Sans", "Noto Sans CJK SC", sans-serif; color: #444; white-space: nowrap; }
.win { width: 1231px; height: 716px; border-radius: 12px 0 0 12px; overflow: hidden; display: flex; flex-direction: column; background: #e4e6e3; }
.m3 { margin-left: 3px; } .m4 { margin-left: 4px; } .m5 { margin-left: 5px; } .m6 { margin-left: 6px; } .m7 { margin-left: 7px; } .m8 { margin-left: 8px; } .m9 { margin-left: 9px; }
.m10 { margin-left: 10px; } .m11 { margin-left: 11px; } .m12 { margin-left: 12px; } .m15 { margin-left: 15px; } .m17 { margin-left: 18px; } .m18 { margin-left: 18px; } .m20 { margin-left: 20px; }
.m23 { margin-left: 23px; } .m25 { margin-left: 25px; } .m26 { margin-left: 26px; } .m28 { margin-left: 28px; }
.flip { transform: scaleY(-1); }
.title { height: 33px; flex: none; display: flex; align-items: center; background: linear-gradient(#151515, #151515) 676px 0 / 522px 1px no-repeat, #c04f25; color: #fdeee8; box-sizing: border-box; }
.title > svg { margin-bottom: 6px; }
.name { width: 304px; margin-left: 61px; letter-spacing: .1px; padding-bottom: 2px; }
.ctx { width: 60px; line-height: 31px; height: 33px; text-align: center; background: #963f1d; color: #f0b79f; }
.wbtns { flex: 1; display: flex; align-items: center; justify-content: flex-end; gap: 35px; padding: 0 17px 6px 0; }
.tabs { height: 24px; flex: none; display: flex; align-items: center; background: #c04f25; color: #fff4ef; text-align: center; line-height: 22px; }
.tabs > span { flex: none; }
.file { width: 54px; margin-right: 7px; }
.active { width: 51px; height: 24px; background: #eff1ee; color: #c04f25; }
.fmt { width: 60px; height: 24px; line-height: 23px; margin-left: 4px; background: #963f1d; }
.tell { margin-left: 6px; color: #f7cdbc; letter-spacing: -.1px; }
.login { margin-left: auto; margin-right: 10px; }
.share { width: 27px; height: 23px; background: #963f1d; display: flex; align-items: center; padding-left: 6px; box-sizing: border-box; }
.ribbon { height: 94px; flex: none; display: flex; background: #eff1ee; border-bottom: 1px solid #cdcfcc; box-sizing: border-box; padding-top: 3px; }
.grp { flex: none; box-sizing: border-box; display: flex; flex-direction: column; border-right: 1px solid #cfd1ce; height: 87px; }
.gbody { height: 69px; flex: none; display: flex; }
.g-clip { width: 115px; } .g-slide { width: 121px; } .g-font { width: 228px; } .g-para { width: 301px; } .g-draw { width: 331px; } .g-edit { width: 75px; }
.glabel { height: 22px; flex: none; display: flex; align-items: center; justify-content: center; color: #666; }
.glabel b { font-weight: 400; flex: 1; text-align: center; }
.g-clip b { padding-right: 18px; } .g-font b { padding-right: 18px; } .g-draw b { padding-right: 16px; } .g-para b { padding-right: 16px; }
.glabel svg { margin: 3px 4px 0 -11px; }
.col { display: flex; flex-direction: column; }
.row { height: 23px; display: flex; align-items: center; }
.row i { width: 19px; flex: none; font-style: normal; }
.row i.sel { padding-left: 3px; width: 16px; }
.dim { color: #9b9d9b; }
.c1 { margin-left: -1px; } .c1 .row i { width: 18px; }
.g-edit .col { margin-left: 7px; }
.big { width: 49px; flex: none; display: flex; flex-direction: column; align-items: center; padding-top: 4px; box-sizing: border-box; }
.bi { margin-bottom: 1px; } .big > svg + span + svg { margin-top: 4px; }
.g-clip .bi { margin-left: 2px; }
.g-slide .big { width: 57px; } .g-slide .bi { margin-bottom: 5px; } .two { display: flex; align-items: center; gap: 4px; margin: -3px 0 0 1px; }
.arr .bi { margin: 1px 0 3px; } .arr { width: 47px; } .qs { width: 54px; margin: 0 4px 0 -4px; } .qs .bi { margin: 1px 0 1px 3px; }
.rows { flex-direction: column; }
.g-font .rows { padding-left: 4px; }
.tr { display: flex; align-items: center; height: 23px; margin-top: 8px; }
.combo { height: 23px; border: 1px solid #bcbebb; background: #fff; display: flex; align-items: center; justify-content: space-between; box-sizing: border-box; padding: 0 4px 0 2px; font-size: 13px; }
.fam { width: 95px; } .fam span { letter-spacing: -.3px; } .size { width: 50px; margin-left: -1px; }
.f { font-weight: 700; font-size: 12.5px; color: #555; width: 22px; text-align: center; }
.ital { font-style: italic; font-family: "Liberation Serif", serif; font-size: 14px; } .und { text-decoration: underline; text-underline-offset: 2px; } .shad { text-shadow: 1.5px 1px 1px #999; font-size: 14px; }
.abc { text-decoration: line-through; font-size: 10.5px; font-weight: 600; margin-right: 3px; width: 22px; letter-spacing: -.4px; }
.t2 { margin-left: -1px; } .aa { font-size: 13px; color: #555; width: 16px; margin-left: 1px; }
.g-font .t2 { margin-top: 7px; }
.pr { width: 170px; }
.pt { padding-left: 8px; } .pb { padding-left: 4px; margin-top: 8px; }
.on { width: 22px; height: 23px; background: #c5c7c4; display: flex; align-items: center; justify-content: center; margin-right: 4px; }
.smart { letter-spacing: .08px; }
.gallery { display: flex; margin: 3px 0 0 5px; height: 62px; width: 138px; border: 1px solid #b4b6b3; box-sizing: border-box; background: #fff; flex: none; }
.shapes { width: 122px; display: grid; grid-template-columns: repeat(6, 20.2px); grid-template-rows: repeat(3, 20px); }
.shapes div { display: flex; align-items: center; justify-content: center; }
.gs { width: 14px; display: flex; flex-direction: column; border-left: 1px solid #b4b6b3; }
.gs div { flex: 1; display: flex; align-items: center; justify-content: center; border-bottom: 1px solid #b4b6b3; }
.gs .off { background: #e2e4e1; }
.gs .more { border-bottom: 0; } .gs .more svg { border-top: 1px solid #666; padding-top: 2px; }
.work { height: 514px; flex: none; display: flex; }
.defs { width: 0; }
.list { width: 133px; height: 514px; overflow: hidden; flex: none; }
.item { height: 51px; margin-bottom: 18px; display: flex; font-size: 16px; line-height: 20px; color: #555; }
.item:first-child { margin-top: -27px; }
.item span { width: 26px; text-align: center; margin-top: -6px; padding-right: 4px; box-sizing: border-box; letter-spacing: -.5px; }
.th { border: 1px solid #c1c3c0; background: #fdfffd; overflow: hidden; }
.item.sel span { color: #d3603a; }
.item.sel .th { box-shadow: 0 0 0 2px #f77b4b; border-color: #f77b4b; }
.scroll { width: 15px; margin-top: 2px; height: 510px; background: #d9dbd9; display: flex; flex-direction: column; justify-content: space-between; flex: none; }
.sb { width: 15px; height: 15px; box-sizing: border-box; border: 1px solid #b8bab8; background: #fff; display: flex; align-items: center; justify-content: center; }
.knob { width: 15px; height: 63px; box-sizing: border-box; border: 1px solid #b8bab8; background: #fff; margin-bottom: 167px; }
.editor { width: 1078px; margin-left: 4px; border-left: 1px solid #c0c2bf; position: relative; display: flex; flex-direction: column; box-sizing: border-box; flex: none; }
.canvas { margin-left: 2px; overflow: hidden; }
.notes { margin-left: 2px; border-top: 1px solid #bfc1be; font-size: 14.7px; line-height: 32px; padding-left: 9px; color: #666; flex: 1; }
.lab { font: 20px "Liberation Sans", "Noto Sans CJK SC", sans-serif; fill: #080c12; }
.nul { font: 17.5px "Liberation Sans", sans-serif; fill: #080c12; }
.wm { font: 16px "Noto Sans CJK SC", sans-serif; fill: #cfd1cf; }
.brand { font: 700 19px "Noto Sans CJK SC", sans-serif; fill: #0f7d70; }
.ime { position: absolute; right: 0; bottom: 10px; width: 103px; height: 21px; border: 1px solid #bcd2e2; border-right: 0; background: linear-gradient(90deg, #f6fafd, #dcecf8); box-sizing: border-box; display: flex; align-items: center; padding-left: 2px; }
.ime span { font-size: 15px; font-weight: 700; color: #3a7dc8; margin: 0 6px 0 4px; }
.pu { margin: 0 5px 0 9px; }
.status { height: 22px; flex: none; border-top: 1px solid #c0c2bf; box-sizing: border-box; background: #eff1ee; display: flex; align-items: center; padding-left: 6px; }
.pages { width: 163px; letter-spacing: .3px; } .lang { margin-left: 17px; letter-spacing: .1px; }
.sr { margin-left: auto; width: 426px; height: 21px; display: flex; align-items: center; flex: none; }
.sr > * { flex: none; }
.s1 { margin: 0 20px 0 5px; } .s2 { margin: 0 19px 0 4px; }
.son { width: 38px; height: 21px; background: #c9cbc8; display: flex; align-items: center; justify-content: center; }
.pct { margin-left: 15px; }
.task { height: 29px; flex: none; border-top: 1px solid #24384e; box-sizing: border-box; background: linear-gradient(#8fa0b8, #8094b0); display: flex; align-items: center; color: #fff; font-size: 12.5px; }
.orb { margin: -7px 0 0 6px; position: relative; }
.tb { height: 28px; box-sizing: border-box; border: 1px solid #d4dce6; outline: 1px solid #2b3d55; outline-offset: 0; border-radius: 2px; background: linear-gradient(#b3bfd0 0, #8b9cb5 50%, #8799b3); display: flex; align-items: center; gap: 4px; padding-left: 7px; flex: none; overflow: hidden; }
.b1 { width: 124px; margin-left: 16px; } .stack { width: 9px; margin: 0 1px 0 2px; height: 27px; background: repeating-linear-gradient(90deg, #3a4d66 0 1px, #c0cbd9 1px 2px, #8b9cb5 2px 4px); flex: none; }
.b2 { width: 132px; margin-left: 1px; } .b3 { width: 132px; margin-left: 5px; background: linear-gradient(#d4dbe5, #a3b1c6 50%, #b4c0d1); } .b4 { width: 132px; margin-left: 5px; } .b5 { width: 132px; margin-left: 5px; }
.api { margin-left: 15px; width: 25px; color: #e3e8ef; font-size: 13px; flex: none; } .hp { width: 31px; flex: none; }
.tc { flex: none; } .chev { margin-bottom: 8px; } .sogou { margin-bottom: 4px; }
.clock { font-size: 12.5px; }
</style>
